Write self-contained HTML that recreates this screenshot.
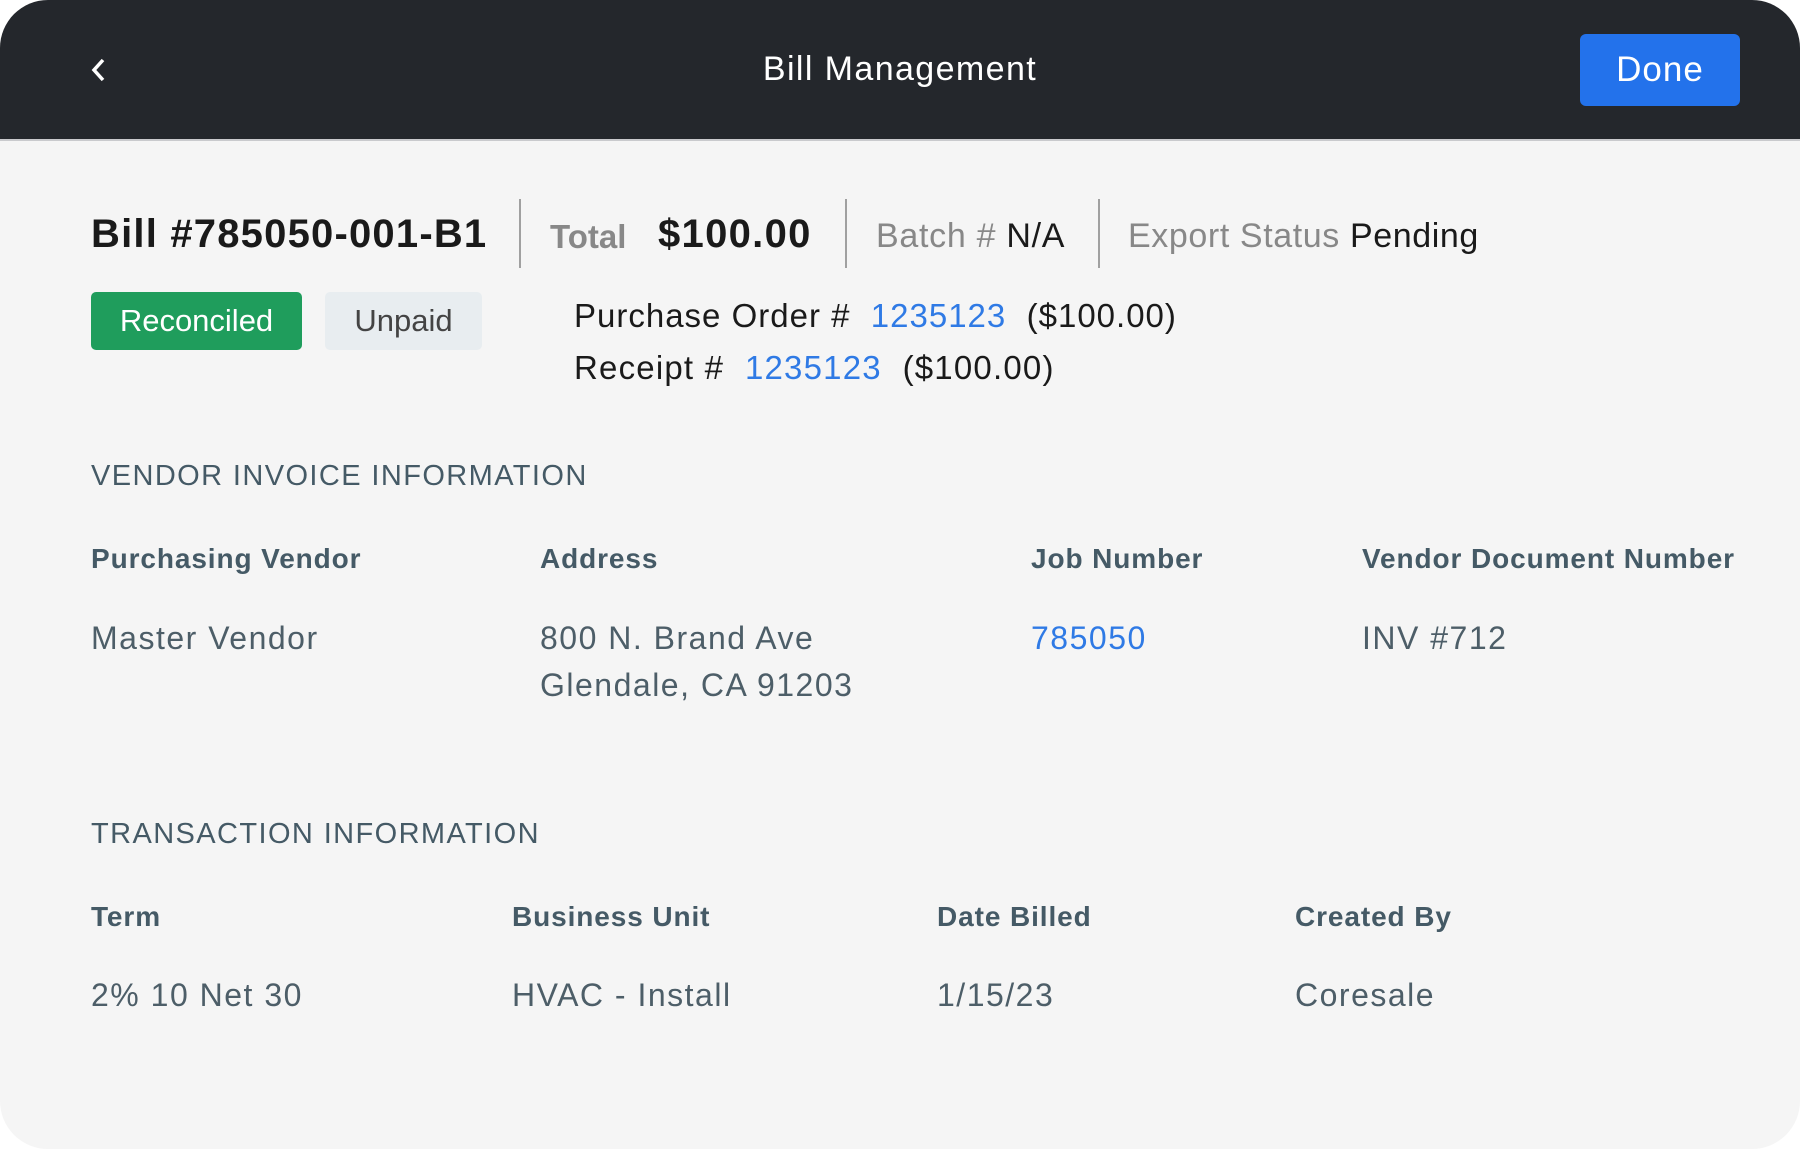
<!DOCTYPE html>
<html><head><meta charset="utf-8"><style>
html,body{margin:0;padding:0;width:1800px;height:1149px;background:#fff;overflow:hidden}
.card{position:absolute;left:0;top:0;width:1800px;height:1149px;border-radius:48px;background:#f5f5f5;overflow:hidden;font-family:"Liberation Sans",sans-serif}
.hdr{position:absolute;left:0;top:0;width:1800px;height:139px;background:#24272c;border-bottom:2px solid #c9cacd}
.t{position:absolute;line-height:1;white-space:nowrap}
.b{font-weight:bold}
.lbl{font-size:28px;font-weight:bold;color:#455a66;letter-spacing:0.9px}
.val{font-size:32px;color:#4d5e68;letter-spacing:1.5px}
.sec{font-size:29px;color:#455a66;letter-spacing:1.4px}
.link{color:#2f7ae5}
.div{position:absolute;top:199px;width:2px;height:69px;background:#a0a0a0}
</style></head><body><div class="card">
<div class="hdr">
<svg style="position:absolute;left:88px;top:56px" width="22" height="28" viewBox="0 0 22 28"><path d="M15 4 L6 14 L15 24" fill="none" stroke="#fff" stroke-width="3.5"/></svg>
<div class="t" style="left:0;width:1800px;text-align:center;top:52px;font-size:34px;color:#fff;letter-spacing:1.4px">Bill Management</div>
<div style="position:absolute;left:1580px;top:34px;width:160px;height:72px;border-radius:6px;background:#2372eb;color:#fff;font-size:35px;line-height:72px;text-align:center;letter-spacing:1px">Done</div>
</div>

<div class="t b" style="left:91px;top:214px;font-size:40px;color:#1a1a1a;letter-spacing:1.2px">Bill #785050-001-B1</div>
<div class="div" style="left:519px"></div>
<div class="t b" style="left:550px;top:220px;font-size:33px;color:#888">Total</div>
<div class="t b" style="left:658px;top:214px;font-size:40px;color:#1a1a1a;letter-spacing:1.3px">$100.00</div>
<div class="div" style="left:845px"></div>
<div class="t" style="left:876px;top:219px;font-size:34px;color:#888;letter-spacing:0.7px">Batch # <span style="color:#1a1a1a">N/A</span></div>
<div class="div" style="left:1098px"></div>
<div class="t" style="left:1128px;top:219px;font-size:34px;color:#888;letter-spacing:0.6px">Export Status <span style="color:#1a1a1a">Pending</span></div>

<div style="position:absolute;left:91px;top:292px;width:211px;height:58px;border-radius:5px;background:#1f9d5c;color:#fff;font-size:31px;line-height:58px;text-align:center">Reconciled</div>
<div style="position:absolute;left:325px;top:292px;width:157px;height:58px;border-radius:5px;background:#e8edf0;color:#444;font-size:31px;line-height:58px;text-align:center">Unpaid</div>

<div class="t" style="left:574px;top:299px;font-size:33px;color:#1a1a1a;letter-spacing:1px">Purchase Order #&nbsp; <span class="link">1235123</span>&nbsp; ($100.00)</div>
<div class="t" style="left:574px;top:351px;font-size:33px;color:#1a1a1a;letter-spacing:1.2px">Receipt #&nbsp; <span class="link">1235123</span>&nbsp; ($100.00)</div>

<div class="t sec" style="left:91px;top:462px">VENDOR INVOICE INFORMATION</div>
<div class="t lbl" style="left:91px;top:545px">Purchasing Vendor</div>
<div class="t lbl" style="left:540px;top:545px">Address</div>
<div class="t lbl" style="left:1031px;top:545px">Job Number</div>
<div class="t lbl" style="left:1362px;top:545px">Vendor Document Number</div>
<div class="t val" style="left:91px;top:622px">Master Vendor</div>
<div class="t val" style="left:540px;top:622px">800 N. Brand Ave</div>
<div class="t val" style="left:540px;top:669px">Glendale, CA 91203</div>
<div class="t val link" style="left:1031px;top:622px">785050</div>
<div class="t val" style="left:1362px;top:622px">INV #712</div>

<div class="t sec" style="left:91px;top:820px">TRANSACTION INFORMATION</div>
<div class="t lbl" style="left:91px;top:903px">Term</div>
<div class="t lbl" style="left:512px;top:903px">Business Unit</div>
<div class="t lbl" style="left:937px;top:903px">Date Billed</div>
<div class="t lbl" style="left:1295px;top:903px">Created By</div>
<div class="t val" style="left:91px;top:979px">2% 10 Net 30</div>
<div class="t val" style="left:512px;top:979px">HVAC - Install</div>
<div class="t val" style="left:937px;top:979px">1/15/23</div>
<div class="t val" style="left:1295px;top:979px">Coresale</div>
</div></body></html>
